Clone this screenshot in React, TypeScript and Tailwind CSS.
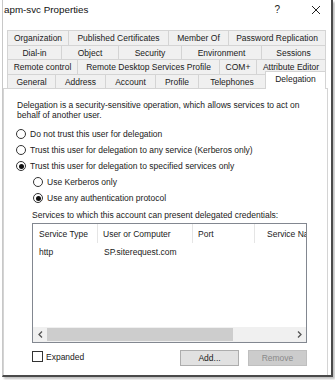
import { ReactNode } from "react";

type Tab = { label: string; w: number; active?: boolean };

const tabRows: { tabs: Tab[]; h: string }[] = [
  {
    h: "h-[15px]",
    tabs: [
      { label: "Organization", w: 61 },
      { label: "Published Certificates", w: 100 },
      { label: "Member Of", w: 60 },
      { label: "Password Replication", w: 98 },
    ],
  },
  {
    h: "h-[14px]",
    tabs: [
      { label: "Dial-in", w: 54 },
      { label: "Object", w: 57 },
      { label: "Security", w: 63 },
      { label: "Environment", w: 80 },
      { label: "Sessions", w: 65 },
    ],
  },
  {
    h: "h-[15px]",
    tabs: [
      { label: "Remote control", w: 70 },
      { label: "Remote Desktop Services Profile", w: 142 },
      { label: "COM+", w: 37 },
      { label: "Attribute Editor", w: 70 },
    ],
  },
  {
    h: "h-[14px]",
    tabs: [
      { label: "General", w: 48 },
      { label: "Address", w: 50 },
      { label: "Account", w: 50 },
      { label: "Profile", w: 43 },
      { label: "Telephones", w: 67 },
      { label: "Delegation", w: 61, active: true },
    ],
  },
];

function Radio({ checked, children }: { checked?: boolean; children: ReactNode }) {
  return (
    <div className="flex h-[16px] items-center gap-[4px]">
      <span className="flex h-[10px] w-[10px] items-center justify-center rounded-full border border-[#333] bg-white">
        {checked && <span className="h-[5px] w-[5px] rounded-full bg-[#111]" />}
      </span>
      <span>{children}</span>
    </div>
  );
}

function Chevron({ dir }: { dir: "left" | "right" }) {
  return (
    <svg width="5" height="7" viewBox="0 0 5 7" className="text-[#555]">
      <path
        d={dir === "left" ? "M4 0.5 L1 3.5 L4 6.5" : "M1 0.5 L4 3.5 L1 6.5"}
        fill="none"
        stroke="currentColor"
        strokeWidth="1.3"
      />
    </svg>
  );
}

export default function App() {
  return (
    <div className="h-[380px] w-[335px] overflow-hidden bg-white font-['Liberation_Sans',Arial,sans-serif] text-[8.5px] leading-[10px] text-[#1a1a1a]">
      <div className="ml-[2px] flex h-[377px] w-[331px] flex-col border-l border-b-2 border-r-2 border-l-[#c8c8c8] border-b-[#4a4a4a] border-r-[#4a4a4a] bg-white shadow-[2px_2px_2px_rgba(0,0,0,0.25)]">
        {/* Title bar */}
        <div className="flex h-[30px] items-start pt-[4px]">
          <span className="ml-[1px] text-[9.8px] leading-[12px] text-[#111]">apm-svc Properties</span>
          <span className="ml-auto text-[10px] leading-[12px] text-[#222]">?</span>
          <svg width="10" height="10" viewBox="0 0 10 10" className="ml-[31px] mr-[10px] mt-[1px] text-[#222]">
            <path d="M1 1 L9 9 M9 1 L1 9" stroke="currentColor" strokeWidth="1" />
          </svg>
        </div>

        {/* Tabs */}
        <div className="flex flex-col">
          {tabRows.map((row, i) => (
            <div key={i} className={`ml-[4px] flex items-end ${row.h}`}>
              {row.tabs.map((t) =>
                t.active ? (
                  <div
                    key={t.label}
                    style={{ width: t.w }}
                    className="relative z-10 -mb-px flex h-[18px] shrink-0 items-center justify-center border-x border-t border-[#d4d4d4] bg-white pb-[3px]"
                  >
                    {t.label}
                  </div>
                ) : (
                  <div
                    key={t.label}
                    style={{ width: t.w }}
                    className="flex h-full shrink-0 items-center justify-center border-l border-t border-[#d4d4d4] bg-[#f0f0f0] last:border-r"
                  >
                    {t.label}
                  </div>
                )
              )}
            </div>
          ))}
        </div>

        {/* Page */}
        <div className="mr-[3px] flex flex-1 flex-col border border-b-0 border-[#d4d4d4] bg-white pl-[12px] pt-[11px]">
          <p className="pl-px">
            Delegation is a security-sensitive operation, which allows services to act on
            <br />
            behalf of another user.
          </p>
          <div className="mt-[6px] flex flex-col">
            <Radio>Do not trust this user for delegation</Radio>
            <Radio>Trust this user for delegation to any service (Kerberos only)</Radio>
            <Radio checked>Trust this user for delegation to specified services only</Radio>
            <div className="flex flex-col pl-[17px]">
              <Radio>Use Kerberos only</Radio>
              <Radio checked>Use any authentication protocol</Radio>
            </div>
          </div>

          <div className="ml-[16px] mt-[4px]">
            Services to which this account can present delegated credentials:
          </div>

          <div className="ml-[16px] mt-[3px] flex h-[120px] w-[275px] flex-col overflow-hidden border border-[#828790] bg-white">
            <div className="flex h-[19px] shrink-0 items-center whitespace-nowrap">
              <div className="flex h-full w-[65px] shrink-0 items-center border-r border-[#e5e5e5] pl-[6px]">Service Type</div>
              <div className="flex h-full w-[95px] shrink-0 items-center border-r border-[#e5e5e5] pl-[5px]">User or Computer</div>
              <div className="flex h-full w-[62px] shrink-0 items-center border-r border-[#e5e5e5] pl-[5px]">Port</div>
              <div className="flex h-full shrink-0 items-center pl-[12px]">Service Name</div>
            </div>
            <div className="mt-[2px] flex h-[14px] items-center whitespace-nowrap">
              <div className="w-[65px] pl-[6px]">http</div>
              <div className="pl-[6px]">SP.siterequest.com</div>
            </div>
            <div className="flex-1" />
            <div className="flex h-[15px] shrink-0 items-center bg-[#f0f0f0]">
              <div className="flex w-[14px] justify-center">
                <Chevron dir="left" />
              </div>
              <div className="h-[13px] w-[186px] bg-[#cdcdcd]" />
              <div className="flex-1" />
              <div className="flex w-[14px] justify-center">
                <Chevron dir="right" />
              </div>
            </div>
          </div>

          <div className="ml-[16px] mt-[7px] flex h-[16px] w-[275px] items-center">
            <span className="-mt-[3px] h-[11px] w-[11px] border border-[#333] bg-white" />
            <span className="-mt-[3px] ml-[3px]">Expanded</span>
            <div className="ml-auto flex h-full gap-[9px]">
              <div className="flex h-full w-[59px] items-center justify-center border border-[#adadad] bg-[#e1e1e1]">
                Add...
              </div>
              <div className="flex h-full w-[59px] items-center justify-center border border-[#bfbfbf] bg-[#cccccc] text-[#8a8a8a]">
                Remove
              </div>
            </div>
          </div>
        </div>
      </div>
    </div>
  );
}
